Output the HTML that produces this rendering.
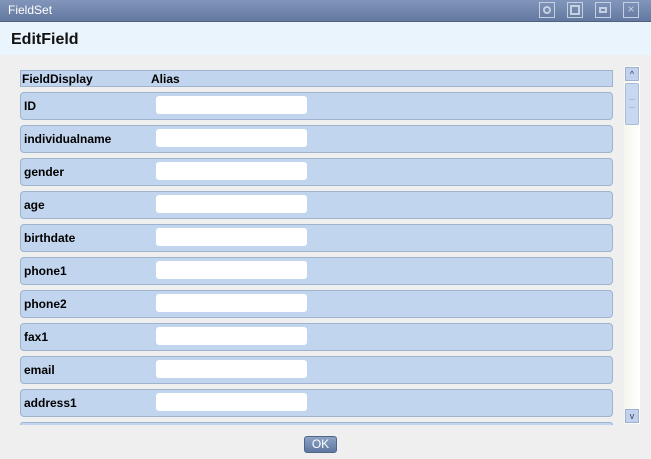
<!DOCTYPE html><html><head><style>
body{margin:0;width:651px;height:459px;overflow:hidden;background:#efefef;font-family:"Liberation Sans",sans-serif;position:relative}
.tb{position:absolute;left:0;top:0;width:651px;height:21px;background:linear-gradient(#8296bb,#64799f);border-bottom:1px solid #50617f}
.tb span{position:absolute;left:8px;top:3px;color:#fff;font-size:12px}
.ic{position:absolute;top:2px;width:16px;height:16px;border:1px solid #c5d0e2;box-sizing:border-box}
.ic i{position:absolute;left:3px;top:3px;width:8px;height:8px;border:2px solid #c5d0e2;box-sizing:border-box}
.hd{position:absolute;left:0;top:22px;width:651px;height:33px;background:#eaf4fd}
.hd b{position:absolute;left:11px;top:9px;font-size:16px;color:#111}
.hr{position:absolute;left:20px;top:70px;width:591px;height:15px;background:#c2d5ee;border:1px solid #9fb3cd;font-size:12px;font-weight:bold}
.r{position:absolute;left:20px;width:591px;height:26px;background:#c2d5ee;border:1px solid #9fb3cd;border-radius:4px;font-size:12px;font-weight:bold}
.r span{position:absolute;left:3px;top:6px}
.r i{position:absolute;left:135px;top:3px;width:151px;height:18px;background:#fff;border-radius:3px}
.sb{position:absolute;left:624px;top:66px;width:16px;height:358px;background:linear-gradient(90deg,#f6f6ee,#fff)}
.ok{position:absolute;left:304px;top:436px;width:33px;height:17px;background:linear-gradient(#8ca3c6,#5f789f);border:1px solid #4f668c;box-sizing:border-box;border-radius:3px;color:#fff;font-size:12px;text-align:center;line-height:15px}
</style></head><body>
<div class="tb"><span>FieldSet</span>
<div class="ic" style="left:539px"><i style="border-radius:50%"></i></div>
<div class="ic" style="left:567px"><i style="left:2px;top:2px;width:10px;height:10px"></i></div>
<div class="ic" style="left:595px"><i style="top:4px;height:6px"></i></div>
<div class="ic" style="left:623px;color:#c5d0e2;font-size:12px;text-align:center;line-height:13px">×</div>
</div>
<div class="hd"><b>EditField</b></div>
<div class="hr"><span style="position:absolute;left:1px;top:1px">FieldDisplay</span><span style="position:absolute;left:130px;top:1px">Alias</span></div>
<div class="r" style="top:92px"><span>ID</span><i></i></div>
<div class="r" style="top:125px"><span>individualname</span><i></i></div>
<div class="r" style="top:158px"><span>gender</span><i></i></div>
<div class="r" style="top:191px"><span>age</span><i></i></div>
<div class="r" style="top:224px"><span>birthdate</span><i></i></div>
<div class="r" style="top:257px"><span>phone1</span><i></i></div>
<div class="r" style="top:290px"><span>phone2</span><i></i></div>
<div class="r" style="top:323px"><span>fax1</span><i></i></div>
<div class="r" style="top:356px"><span>email</span><i></i></div>
<div class="r" style="top:389px"><span>address1</span><i></i></div>
<div class="r" style="top:422px;height:2px;border-bottom:none;border-radius:4px 4px 0 0"></div>
<div class="sb">
<div style="position:absolute;left:1px;top:1px;width:14px;height:14px;background:#c2d2ee;border:1px solid #9fb3cd;box-sizing:border-box;font-size:9px;color:#345;text-align:center;line-height:12px">^</div>
<div style="position:absolute;left:1px;top:17px;width:14px;height:42px;background:#c8d8f0;border:1px solid #a9bcd6;box-sizing:border-box;border-radius:2px"><div style="position:absolute;left:3px;top:15px;width:6px;height:7px;border-top:1px solid #a9bcd6;border-bottom:1px solid #a9bcd6"></div></div>
<div style="position:absolute;left:1px;top:343px;width:14px;height:14px;background:#c2d2ee;border:1px solid #9fb3cd;box-sizing:border-box;font-size:9px;color:#345;text-align:center;line-height:12px">v</div>
</div>
<div class="ok">OK</div>
</body></html>
